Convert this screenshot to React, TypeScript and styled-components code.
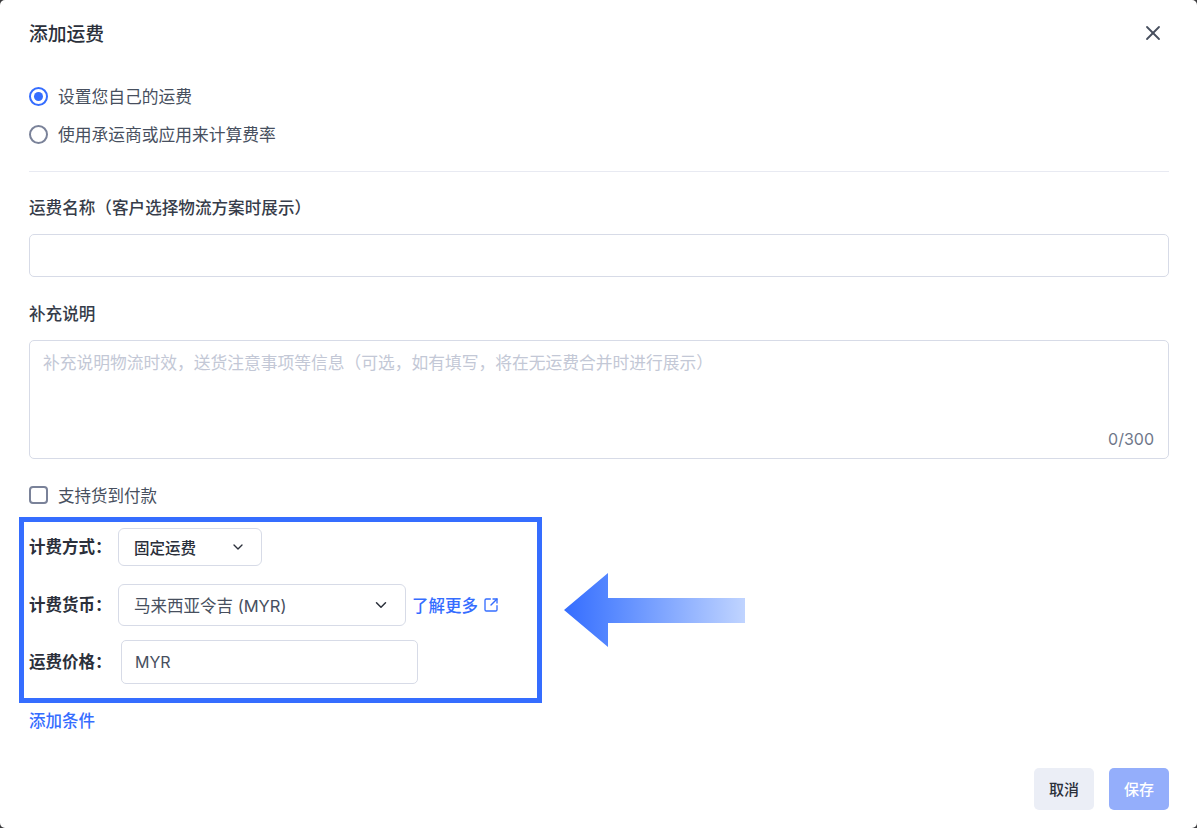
import React from 'react';
import styled, { createGlobalStyle } from 'styled-components';
import { ChevronDown, SquareArrowOutUpRight, X } from 'lucide-react';

const GlobalStyle = createGlobalStyle`
  html, body {
    margin: 0;
    padding: 0;
    background: #3a3a3c;
  }
  * {
    box-sizing: border-box;
  }
  body {
    font-family: Inter, "Noto Sans CJK SC", sans-serif;
  }
`;

const Modal = styled.div`
  width: 1197px;
  height: 828px;
  padding: 0 28px 0 29px;
  background: #ffffff;
  border-radius: 5px;
  overflow: hidden;
`;

const Header = styled.header`
  height: 68px;
  padding-bottom: 3px;
  display: flex;
  justify-content: space-between;
  align-items: center;
`;

const Title = styled.h2`
  margin: 0;
  font-size: 18.8px;
  font-weight: 500;
  color: #2b303b;
`;

const CloseButton = styled.button`
  display: flex;
  margin: 1px 4px 0 0;
  padding: 0;
  border: none;
  background: none;
  color: #474f5e;
`;

const RadioGroup = styled.div`
  padding-top: 9px;
  display: flex;
  flex-direction: column;
`;

const RadioRow = styled.label`
  height: 38px;
  padding-bottom: 1px;
  display: flex;
  align-items: center;
  gap: 10px;
  font-size: 16.75px;
  color: #474f5e;
`;

const RadioMark = styled.span<{ $checked?: boolean }>`
  width: 19px;
  height: 19px;
  margin-top: 1px;
  border-radius: 50%;
  border: 2px solid ${p => (p.$checked ? '#356dff' : '#7a8299')};
  display: flex;
  align-items: center;
  justify-content: center;
  &::after {
    content: '';
    width: 9px;
    height: 9px;
    border-radius: 50%;
    background: ${p => (p.$checked ? '#356dff' : 'transparent')};
  }
`;

const Divider = styled.hr`
  margin: 18px 0 0;
  border: none;
  border-top: 1px solid #e8eaf2;
`;

const FieldLabel = styled.div<{ $top: number }>`
  margin-top: ${p => p.$top}px;
  height: 24px;
  line-height: 24px;
  font-size: 16.6px;
  font-weight: 500;
  color: #363c49;
`;

const TextInput = styled.input`
  display: block;
  width: 100%;
  height: 43px;
  margin-top: 14px;
  border: 1px solid #d7dbe7;
  border-radius: 5px;
  background: #ffffff;
  outline: none;
`;

const AreaWrap = styled.div`
  position: relative;
  margin-top: 14px;
  height: 119px;
`;

const TextArea = styled.textarea`
  display: block;
  width: 100%;
  height: 100%;
  padding: 10px 13px;
  border: 1px solid #d7dbe7;
  border-radius: 5px;
  outline: none;
  resize: none;
  font-family: inherit;
  font-size: 16.75px;
  line-height: 24px;
  &::placeholder {
    color: #c3c8d6;
    opacity: 1;
  }
`;

const Counter = styled.span`
  position: absolute;
  right: 15px;
  bottom: 10px;
  font-size: 16px;
  color: #6f778a;
`;

const CheckRow = styled.label`
  margin-top: 24px;
  height: 24px;
  display: flex;
  align-items: center;
  gap: 10px;
  font-size: 16.5px;
  color: #474f5e;
`;

const CheckMark = styled.span`
  width: 19px;
  height: 18px;
  border: 2px solid #7a8299;
  border-radius: 4px;
`;

const HighlightRow = styled.div`
  margin: 10px 0 0 -10px;
  display: flex;
  align-items: center;
  gap: 22px;
`;

const Highlight = styled.div`
  width: 523px;
  height: 186px;
  padding: 6px 0 0 5px;
  border: 5px solid #356dff;
  display: flex;
  flex-direction: column;
`;

const FormRow = styled.div<{ $top?: number }>`
  margin-top: ${p => p.$top ?? 0}px;
  display: flex;
  align-items: center;
`;

const RowLabel = styled.span`
  width: 89px;
  flex-shrink: 0;
  padding-bottom: 2px;
  font-size: 16.5px;
  font-weight: 600;
  color: #2b303b;
`;

const Select = styled.div<{ $width: number; $height: number; $strong?: boolean }>`
  width: ${p => p.$width}px;
  height: ${p => p.$height}px;
  padding: 0 15px 1px;
  border: 1px solid #d7dbe7;
  border-radius: 6px;
  display: flex;
  align-items: center;
  justify-content: space-between;
  font-size: ${p => (p.$strong ? 15.5 : 16.5)}px;
  font-weight: ${p => (p.$strong ? 500 : 400)};
  color: ${p => (p.$strong ? '#2b303b' : '#474f5e')};
  svg {
    color: #2b303b;
  }
`;

const LearnMore = styled.a`
  margin-left: 6px;
  display: flex;
  align-items: center;
  gap: 5px;
  font-size: 16.5px;
  font-weight: 500;
  color: #356dff;
`;

const PriceInput = styled.div`
  width: 297px;
  height: 44px;
  margin-left: 3px;
  padding: 0 13px 1px;
  border: 1px solid #d7dbe7;
  border-radius: 5px;
  display: flex;
  align-items: center;
  font-size: 16px;
  color: #474f5e;
`;

const AddCondition = styled.a`
  display: block;
  margin-top: 6px;
  height: 24px;
  line-height: 24px;
  font-size: 16.5px;
  font-weight: 500;
  color: #356dff;
`;

const Footer = styled.footer`
  margin-top: 35px;
  display: flex;
  justify-content: flex-end;
  gap: 15px;
`;

const Button = styled.button<{ $primary?: boolean }>`
  width: 60px;
  height: 42px;
  padding: 0 0 2px;
  border: none;
  border-radius: 5px;
  font-family: inherit;
  font-size: 15px;
  font-weight: 500;
  background: ${p => (p.$primary ? '#94aefb' : '#ebeef6')};
  color: ${p => (p.$primary ? '#ffffff' : '#2b303b')};
`;

const Arrow = () => (
  <svg width="181" height="74" viewBox="0 0 181 74">
    <defs>
      <linearGradient id="arrowFill" x1="0" y1="0" x2="1" y2="0">
        <stop offset="0" stopColor="#356dff" />
        <stop offset="0.25" stopColor="#5587ff" />
        <stop offset="1" stopColor="#c0d4ff" />
      </linearGradient>
    </defs>
    <path d="M0 37 L44 0 V25 H181 V50 H44 V74 Z" fill="url(#arrowFill)" />
  </svg>
);

export default function App() {
  return (
    <Modal>
      <GlobalStyle />
      <Header>
        <Title>添加运费</Title>
        <CloseButton>
          <X size={24} strokeWidth={1.8} />
        </CloseButton>
      </Header>
      <RadioGroup>
        <RadioRow>
          <RadioMark $checked />
          设置您自己的运费
        </RadioRow>
        <RadioRow>
          <RadioMark />
          使用承运商或应用来计算费率
        </RadioRow>
      </RadioGroup>
      <Divider />
      <FieldLabel $top={24}>运费名称（客户选择物流方案时展示）</FieldLabel>
      <TextInput />
      <FieldLabel $top={25}>补充说明</FieldLabel>
      <AreaWrap>
        <TextArea placeholder="补充说明物流时效，送货注意事项等信息（可选，如有填写，将在无运费合并时进行展示）" />
        <Counter>0/300</Counter>
      </AreaWrap>
      <CheckRow>
        <CheckMark />
        支持货到付款
      </CheckRow>
      <HighlightRow>
        <Highlight>
          <FormRow>
            <RowLabel>计费方式：</RowLabel>
            <Select $width={144} $height={38} $strong>
              固定运费
              <ChevronDown size={16} />
            </Select>
          </FormRow>
          <FormRow $top={18}>
            <RowLabel>计费货币：</RowLabel>
            <Select $width={288} $height={42}>
              马来西亚令吉 (MYR)
              <ChevronDown size={18} />
            </Select>
            <LearnMore>
              了解更多
              <SquareArrowOutUpRight size={16} />
            </LearnMore>
          </FormRow>
          <FormRow $top={14}>
            <RowLabel>运费价格：</RowLabel>
            <PriceInput>MYR</PriceInput>
          </FormRow>
        </Highlight>
        <Arrow />
      </HighlightRow>
      <AddCondition>添加条件</AddCondition>
      <Footer>
        <Button>取消</Button>
        <Button $primary>保存</Button>
      </Footer>
    </Modal>
  );
}
